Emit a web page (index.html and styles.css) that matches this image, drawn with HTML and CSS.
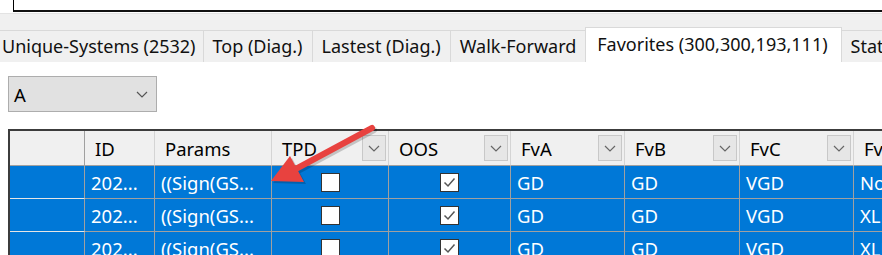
FILE: index.html
```html
<!DOCTYPE html>
<html lang="en">
<head>
    <meta charset="UTF-8">
    <title>Favorites</title>
    <link rel="stylesheet" href="styles.css">
</head>
<body>
    <div class="top">
        <div class="textbox"></div>
    </div>
    <div class="tabstrip">
        <div class="tab">Unique-Systems (2532)</div>
        <div class="tab">Top (Diag.)</div>
        <div class="tab">Lastest (Diag.)</div>
        <div class="tab">Walk-Forward</div>
        <div class="tab active">Favorites (300,300,193,111)</div>
        <div class="tab">Statistics</div>
    </div>
    <div class="panel">
        <div class="combo">
            <span>A</span>
            <svg class="chev" width="12" height="7" viewBox="0 0 12 7"><polyline points="1,1 6,6 11,1" fill="none" stroke="#555" stroke-width="1.2"/></svg>
        </div>
        <div class="grid">
            <div class="row head">
                <div class="cell rh"></div>
                <div class="cell">ID</div>
                <div class="cell">Params</div>
                <div class="cell">TPD <span class="filter"><svg width="12" height="7" viewBox="0 0 12 7"><polyline points="1,1 6,6 11,1" fill="none" stroke="#666" stroke-width="1.2"/></svg></span></div>
                <div class="cell">OOS <span class="filter"><svg width="12" height="7" viewBox="0 0 12 7"><polyline points="1,1 6,6 11,1" fill="none" stroke="#666" stroke-width="1.2"/></svg></span></div>
                <div class="cell">FvA <span class="filter"><svg width="12" height="7" viewBox="0 0 12 7"><polyline points="1,1 6,6 11,1" fill="none" stroke="#666" stroke-width="1.2"/></svg></span></div>
                <div class="cell">FvB <span class="filter"><svg width="12" height="7" viewBox="0 0 12 7"><polyline points="1,1 6,6 11,1" fill="none" stroke="#666" stroke-width="1.2"/></svg></span></div>
                <div class="cell">FvC <span class="filter"><svg width="12" height="7" viewBox="0 0 12 7"><polyline points="1,1 6,6 11,1" fill="none" stroke="#666" stroke-width="1.2"/></svg></span></div>
                <div class="cell">FvD</div>
            </div>
            <div class="row sel">
                <div class="cell rh"></div>
                <div class="cell">202...</div>
                <div class="cell">((Sign(GS...</div>
                <div class="cell center"><span class="check"></span></div>
                <div class="cell center"><span class="check"><svg width="17" height="17" viewBox="0 0 17 17"><polyline points="3.5,8.5 7,12 13.5,4.5" fill="none" stroke="#555" stroke-width="1.5"/></svg></span></div>
                <div class="cell">GD</div>
                <div class="cell">GD</div>
                <div class="cell">VGD</div>
                <div class="cell">None</div>
            </div>
            <div class="row sel">
                <div class="cell rh"></div>
                <div class="cell">202...</div>
                <div class="cell">((Sign(GS...</div>
                <div class="cell center"><span class="check"></span></div>
                <div class="cell center"><span class="check"><svg width="17" height="17" viewBox="0 0 17 17"><polyline points="3.5,8.5 7,12 13.5,4.5" fill="none" stroke="#555" stroke-width="1.5"/></svg></span></div>
                <div class="cell">GD</div>
                <div class="cell">GD</div>
                <div class="cell">VGD</div>
                <div class="cell">XLD</div>
            </div>
            <div class="row sel">
                <div class="cell rh"></div>
                <div class="cell">202...</div>
                <div class="cell">((Sign(GS...</div>
                <div class="cell center"><span class="check"></span></div>
                <div class="cell center"><span class="check"><svg width="17" height="17" viewBox="0 0 17 17"><polyline points="3.5,8.5 7,12 13.5,4.5" fill="none" stroke="#555" stroke-width="1.5"/></svg></span></div>
                <div class="cell">GD</div>
                <div class="cell">GD</div>
                <div class="cell">VGD</div>
                <div class="cell">XLD</div>
            </div>
        </div>
    </div>

    <!-- callout arrow drawn over the grid -->
    <svg class="arrow" width="882" height="255" viewBox="0 0 882 255">
        <g fill="#000" opacity="0.18" transform="translate(2,2)">
            <line x1="372" y1="128" x2="292" y2="171" stroke="#000" stroke-width="6" stroke-linecap="round"/>
            <polygon points="271,181 290,156 304,182"/>
        </g>
        <line x1="372" y1="128" x2="292" y2="171" stroke="#e8423f" stroke-width="6" stroke-linecap="round"/>
        <polygon points="271,181 290,156 304,182" fill="#e8423f"/>
    </svg>
</body>
</html>
```

FILE: styles.css
```css
body {
    margin: 0;
    width: 882px;
    height: 255px;
    overflow: hidden;
    background: #fff;
    font-family: "Noto Sans", "Open Sans", sans-serif;
    font-size: 18.5px;
    color: #000;
}
.top {
    height: 13px;
    padding-left: 13px;
    background: #fff;
}
.textbox {
    height: 10px;
    border-left: 1px solid #000;
    border-bottom: 2px solid #111;
}
.tabstrip {
    display: flex;
    align-items: flex-end;
    height: 49px;
    background: #f0f0f0;
    border-top: 1px solid #e3e3e3;
    box-sizing: border-box;
    white-space: nowrap;
    overflow: hidden;
    font-size: 18px;
}
.tab {
    flex-shrink: 0;
    height: 32px;
    line-height: 30px;
    padding: 0 9px;
    box-sizing: border-box;
    border: 1px solid #d9d9d9;
    border-bottom: none;
    border-left: none;
    background: #f0f0f0;
    color: #111;
}
.tab:first-child {
    padding: 0 7px 0 2px;
}
.tab.active {
    height: 35px;
    line-height: 33px;
    padding: 0 13px 0 11px;
    background: #fff;
    border-left: 1px solid #d9d9d9;
    margin-left: -1px;
}
.panel {
    padding: 14px 0 0 8px;
    background: #fff;
}
.combo {
    width: 149px;
    height: 36px;
    box-sizing: border-box;
    border: 1px solid #adadad;
    background: #e1e1e1;
    display: flex;
    align-items: center;
    justify-content: space-between;
    padding: 0 8px 0 5px;
}
.grid {
    margin-top: 17px;
    border: 2px solid #3c3c3c;
    border-right: none;
    width: 1000px;
}
.row {
    display: grid;
    grid-template-columns: 75px 70px 117px 117px 122px 114px 115px 114px 140px;
    height: 33px;
}
.row.head {
    height: 35px;
    background: #f0f0f0;
}
.cell {
    display: flex;
    align-items: center;
    justify-content: space-between;
    padding-left: 6px;
    box-sizing: border-box;
    border-right: 1px solid #a0a0a0;
    border-bottom: 1px solid #a0a0a0;
    white-space: nowrap;
    overflow: hidden;
}
.head .cell {
    padding-left: 10px;
    padding-right: 2px;
    border-right: 1px solid #d4d4d4;
    border-bottom: 1px solid #a0a0a0;
}
.head .cell.rh {
    border-right: 1px solid #a0a0a0;
}
.sel .cell {
    background: #0078d7;
    color: #fff;
}
.sel .cell.rh {
    border-bottom: 1px solid #e6e6e6;
}
.cell.center {
    justify-content: center;
    padding-left: 0;
}
.filter {
    width: 24px;
    height: 26px;
    box-sizing: border-box;
    border: 1px solid #c8c8c8;
    background: #e6e6e6;
    display: flex;
    align-items: center;
    justify-content: center;
}
.check {
    width: 19px;
    height: 19px;
    box-sizing: border-box;
    border: 1px solid #333;
    background: #fff;
    display: flex;
    align-items: center;
    justify-content: center;
}
.arrow {
    position: absolute;
    left: 0;
    top: 0;
    pointer-events: none;
}
```
